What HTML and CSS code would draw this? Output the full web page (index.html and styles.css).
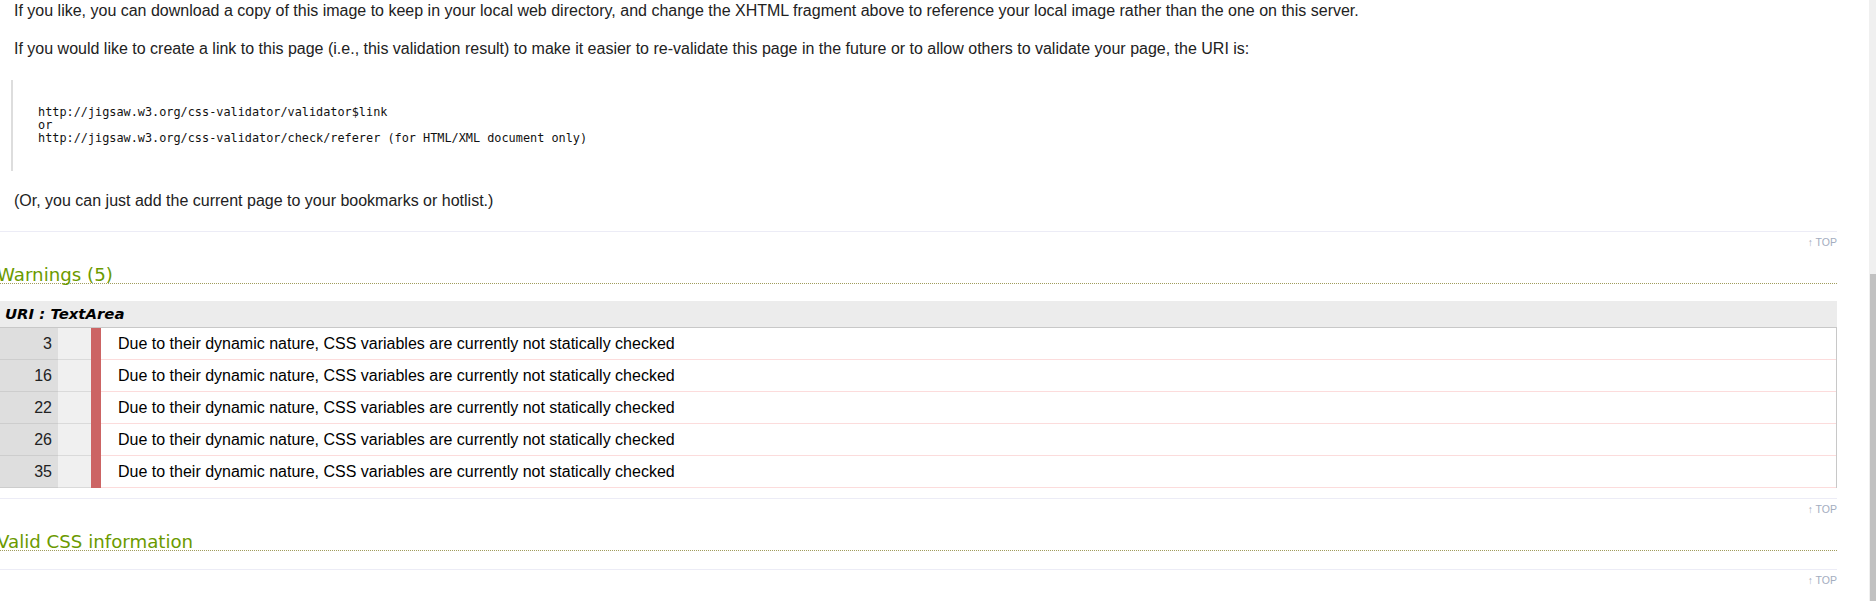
FILE: index.html
```html
<!DOCTYPE html>
<html lang="en">
<head>
<meta charset="utf-8">
<title>W3C CSS Validator results</title>
<link rel="stylesheet" href="styles.css">
</head>
<body>
<div class="page">
  <div class="intro">
    <p class="note">If you like, you can download a copy of this image to keep in your local web directory, and change the XHTML fragment above to reference your local image rather than the one on this server.</p>
    <p class="note second">If you would like to create a link to this page (i.e., this validation result) to make it easier to re-validate this page in the future or to allow others to validate your page, the URI is:</p>
    <pre class="uri">http://jigsaw.w3.org/css-validator/validator$link
or
http://jigsaw.w3.org/css-validator/check/referer (for HTML/XML document only)</pre>
    <p class="or-note">(Or, you can just add the current page to your bookmarks or hotlist.)</p>
  </div>
  <div class="toplink"><a href="#top">&#8593; TOP</a></div>

  <section class="block warnings">
    <h3 class="heading">Warnings (5)</h3>
    <div class="uri-head">URI : TextArea</div>
    <table class="msgs">
      <tbody>
        <tr><td class="num">3</td><td class="ctx"></td><td class="bar"></td><td class="msg">Due to their dynamic nature, CSS variables are currently not statically checked</td></tr>
        <tr><td class="num">16</td><td class="ctx"></td><td class="bar"></td><td class="msg">Due to their dynamic nature, CSS variables are currently not statically checked</td></tr>
        <tr><td class="num">22</td><td class="ctx"></td><td class="bar"></td><td class="msg">Due to their dynamic nature, CSS variables are currently not statically checked</td></tr>
        <tr><td class="num">26</td><td class="ctx"></td><td class="bar"></td><td class="msg">Due to their dynamic nature, CSS variables are currently not statically checked</td></tr>
        <tr><td class="num">35</td><td class="ctx"></td><td class="bar"></td><td class="msg">Due to their dynamic nature, CSS variables are currently not statically checked</td></tr>
      </tbody>
    </table>
  </section>
  <div class="toplink"><a href="#top">&#8593; TOP</a></div>

  <section class="block valid">
    <h3 class="heading">Valid CSS information</h3>
  </section>
  <div class="toplink"><a href="#top">&#8593; TOP</a></div>
</div>
<div class="scrollbar"><div class="thumb"></div></div>
</body>
</html>
```

FILE: styles.css
```css
html, body {
  margin: 0;
  padding: 0;
  overflow: hidden;
  background: #ffffff;
}

body {
  font-family: "Liberation Sans", Arial, sans-serif;
  color: #1c1c1c;
}

.page {
  width: 1837px;
}

.intro {
  padding-left: 14px;
  padding-bottom: 20px;
}

.note {
  margin: 0;
  font-size: 16px;
  line-height: 22px;
  color: #222;
}

.note.second {
  margin-top: 16px;
}

.uri {
  margin: 20px 0 0 -3px;
  border-left: 2px solid #dddddd;
  padding: 26px 0 26px 25px;
  font-family: "DejaVu Sans Mono", "Liberation Mono", monospace;
  font-size: 11.85px;
  line-height: 13px;
  color: #111;
}

.or-note {
  margin: 20px 0 0 0;
  font-size: 16px;
  line-height: 20px;
  color: #222;
}

.toplink {
  border-top: 1px solid #ececf6;
  height: 20px;
  line-height: 20px;
  text-align: right;
  font-size: 10.5px;
}

.toplink a {
  color: #a4adc0;
  text-decoration: none;
}

.block {
  padding-top: 15px;
}

.block.warnings {
  padding-bottom: 10px;
}

.block.valid {
  padding-bottom: 18px;
}

.heading {
  margin: 0;
  font-family: "DejaVu Sans", Verdana, sans-serif;
  font-weight: normal;
  font-size: 18.2px;
  line-height: 16px;
  color: #6b9a00;
  text-indent: -3px;
  border-bottom: 1px dotted #a09c5c;
  white-space: nowrap;
}

.uri-head {
  margin-top: 17px;
  height: 26px;
  line-height: 26px;
  padding-left: 5px;
  background: #ececec;
  font-family: "DejaVu Sans", Verdana, sans-serif;
  font-weight: bold;
  font-style: italic;
  font-size: 14.9px;
  color: #000;
}

.msgs {
  width: 100%;
  border-collapse: separate;
  border-spacing: 0;
  border-top: 1px solid #c8c8c8;
  border-right: 1px solid #c8c8c8;
  font-size: 16px;
}

.msgs td {
  padding: 0;
  height: 31px;
  line-height: 19px;
  vertical-align: middle;
}

.msgs .num {
  width: 52px;
  padding-right: 6px;
  text-align: right;
  background: #dedede;
  border-bottom: 1px solid #cdcdcd;
  color: #222;
}

.msgs .ctx {
  width: 33px;
  background: #f0f0f0;
  border-bottom: 1px solid #dadada;
}

.msgs .bar {
  width: 10px;
  background: #cc6464;
}

.msgs .msg {
  padding-left: 17px;
  border-bottom: 1px solid #fcdcdc;
  color: #000;
}

.scrollbar {
  position: fixed;
  top: 0;
  right: 0;
  width: 7px;
  height: 100%;
  background: #f0f0f0;
}

.scrollbar .thumb {
  position: absolute;
  top: 274px;
  bottom: 0;
  left: 1px;
  right: 0;
  background: #c1c1c1;
}
```
